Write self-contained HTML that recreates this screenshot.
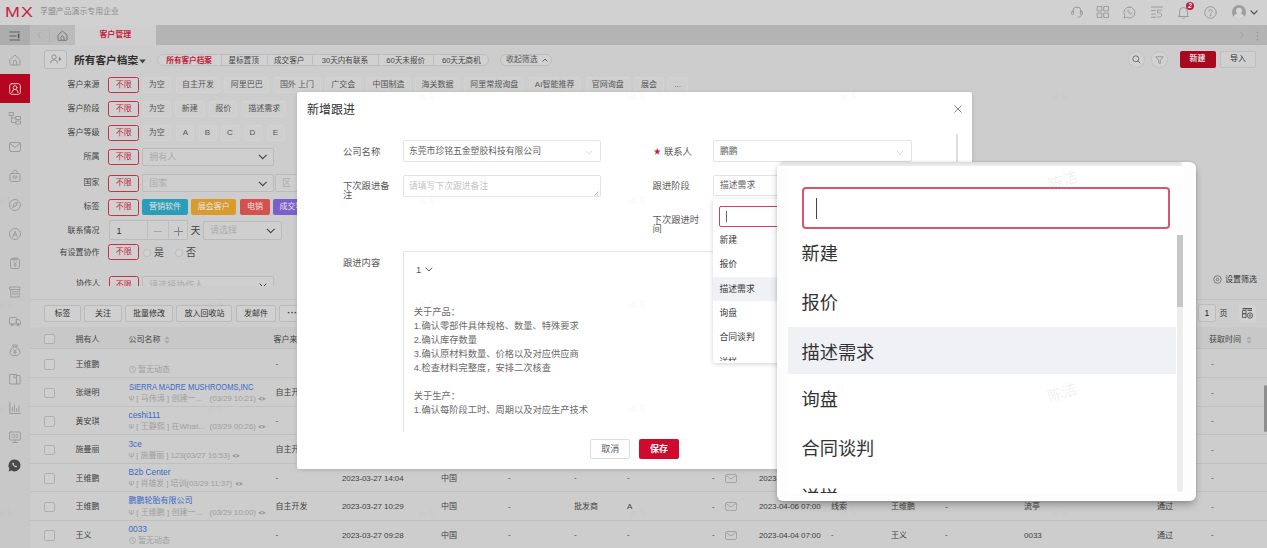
<!DOCTYPE html>
<html lang="zh-CN">
<head>
<meta charset="utf-8">
<title>客户管理</title>
<style>
*{box-sizing:border-box;margin:0;padding:0}
html,body{width:1267px;height:548px;overflow:hidden;background:#cdcdcd}
body{font-family:"Liberation Sans","Noto Sans CJK SC",sans-serif;font-size:8px;color:#333;position:relative;line-height:1}
.a{position:absolute;white-space:nowrap}
svg{display:block;overflow:visible}
#hdr{left:0;top:0;width:1267px;height:25px;background:#d1d1d1}
#tabbar{left:0;top:25px;width:1267px;height:19.5px;background:#b4b4b4}
#side{left:0;top:44.5px;width:30px;height:504px;background:#c8c8c8}
.ic{stroke:#9c9c9c;fill:none;stroke-width:1;stroke-linecap:round;stroke-linejoin:round}
.lbl{font-size:8px;color:#444;text-align:right;width:60px;left:39.6px}
.nol{left:108.4px;width:30.6px;height:16.6px;border:1.2px solid #c62f46;border-radius:2.5px;color:#c4283f;font-size:8px;line-height:14.2px;text-align:center;background:#d0d0d0}
.opt{font-size:8px;color:#555;line-height:14px;height:16px;padding:0;text-align:center;border:1px solid #d3d3d3;border-radius:2px;background:#cfcfcf}
.sel{height:18px;border:1px solid #bbb;border-radius:2px;background:#cfcfcf;font-size:9px;color:#adadad;line-height:16px;padding-left:6px}
.tag{height:15.5px;border-radius:2px;color:#e4e4e4;font-size:8px;line-height:15.5px;text-align:center}
.tb{top:304.5px;height:17.5px;border:1px solid #bababa;border-radius:2px;background:#d0d0d0;font-size:8px;color:#333;line-height:15.5px;text-align:center}
.cb{width:10.5px;height:10.5px;border:1px solid #b0b0b0;border-radius:2px;background:#cfcfcf;left:44px}
.t{font-size:8px;color:#424242;line-height:10px}
.co{font-size:8px;color:#3b69c4;left:128.5px;line-height:10px}
.sub{font-size:8px;color:#a0a0a0;left:128.5px;line-height:10px}
.wm{font-size:8px;color:rgba(110,110,110,.08);transform:rotate(-18deg)}
</style>
</head>
<body>
<div class="a" id="hdr"></div>
<div class="a" id="tabbar"></div>
<div class="a" id="side"></div>


<div class="a" style="left:5px;top:2.5px;font-size:15.5px;color:#c4213c;letter-spacing:1px;transform:scaleX(1.15);transform-origin:0 0;line-height:17px">MX</div>
<div class="a" style="left:40px;top:7px;font-size:7.9px;color:#8c8c8c;line-height:9px">孚盟产品演示专用企业</div>
<svg class="a ic" style="left:1070px;top:5px" width="14" height="14" viewBox="0 0 14 14"><path d="M3 7.5V6a4 4 0 0 1 8 0v1.5"/><rect x="1.6" y="6.2" width="2" height="3.4" rx="0.8"/><rect x="10.4" y="6.2" width="2" height="3.4" rx="0.8"/><path d="M11.2 9.8c0 1.6-1.2 2.4-3.2 2.4"/></svg>
<svg class="a ic" style="left:1097px;top:6px" width="12" height="12" viewBox="0 0 12 12"><rect x="0.5" y="0.5" width="4.4" height="4.4"/><rect x="7.1" y="0.5" width="4.4" height="4.4"/><rect x="0.5" y="7.1" width="4.4" height="4.4"/><rect x="7.1" y="7.1" width="4.4" height="4.4"/></svg>
<svg class="a ic" style="left:1123px;top:5.5px" width="13" height="13" viewBox="0 0 13 13"><path d="M6.5 1a5.5 5.5 0 1 1-2.9 10.2L1 12l.8-2.5A5.5 5.5 0 0 1 6.5 1z"/><path d="M4.6 4.2c-.4.5-.2 1.6 1 2.800s2.300 1.500 2.900 1.100l.3-.7-1.100-.6-.5.4c-.6-.2-1.300-.9-1.600-1.600l.4-.5-.6-1.100z" stroke-width="0.7"/></svg>
<svg class="a ic" style="left:1151px;top:6px" width="12" height="12" viewBox="0 0 12 12"><path d="M0.5 1h11M0.5 4.5h4M0.5 8h4M0.5 11.3h4"/><path d="M6.5 4.2h4.200M6.5 4.2v2.800c2-.6 4.200 0 4.200 2s-2.500 2.800-4.500 1.800" stroke-width="0.9"/></svg>
<svg class="a ic" style="left:1177px;top:5px" width="13" height="14" viewBox="0 0 13 14"><path d="M2.5 10.5V6.5a4 4 0 0 1 8 0v4l1 1h-10z"/><path d="M5.3 12.8a1.3 1.3 0 0 0 2.400 0"/></svg>
<div class="a" style="left:1186px;top:2px;width:8px;height:8px;border-radius:4px;background:#c01f3a;color:#eee;font-size:6.5px;line-height:8px;text-align:center;font-weight:bold;font-style:italic">2</div>
<svg class="a ic" style="left:1204px;top:5.5px" width="13" height="13" viewBox="0 0 13 13"><circle cx="6.5" cy="6.5" r="5.8"/><path d="M4.8 5.2a1.700 1.700 0 1 1 2.500 1.500c-.6.300-.8.700-.8 1.300"/><circle cx="6.5" cy="9.7" r="0.3"/></svg>
<svg class="a" style="left:1231.5px;top:5px" width="14" height="14" viewBox="0 0 14 14"><circle cx="7" cy="7" r="7" fill="#9d9d9d"/><circle cx="7" cy="5.8" r="3" fill="#d6d6d6"/><path d="M1.8 11.700a5.500 5.500 0 0 1 10.400 0A7 7 0 0 1 1.800 11.700z" fill="#d6d6d6"/></svg>
<svg class="a" style="left:1250px;top:9.5px" width="8" height="5" viewBox="0 0 8 5"><path d="M1 1l3 3 3-3" fill="none" stroke="#555" stroke-width="1.2" stroke-linecap="round" stroke-linejoin="round"/></svg>
<div class="a" style="left:0;top:25px;width:30px;height:19.5px;background:#adadad"></div>
<div class="a" style="left:30px;top:25px;width:45px;height:19.5px;background:#bbbbbb"></div>
<div class="a" style="left:49px;top:28px;width:1px;height:14px;background:#b3b3b3"></div>
<svg class="a" style="left:9px;top:30.8px" width="12" height="10" viewBox="0 0 12 10"><path d="M0.5 1h10.500M0.500 5h7M0.500 9h10.500" stroke="#5a5a5a" stroke-width="0.9" fill="none"/><path d="M9.6 3.3v3.400" stroke="#555" stroke-width="1.5" stroke-linecap="round"/></svg>
<svg class="a" style="left:37px;top:31px" width="5" height="8" viewBox="0 0 5 8"><path d="M4 0.5L1 4l3 3.500" stroke="#a9a9a9" stroke-width="1" fill="none"/></svg>
<svg class="a" style="left:56.5px;top:29.5px" width="11" height="11" viewBox="0 0 11 11"><path d="M1 5L5.500 1 10 5v4.500a.8.800 0 0 1-.8.800H1.800a.8.800 0 0 1-.8-.8z" stroke="#777" stroke-width="1" fill="none" stroke-linejoin="round"/><path d="M4 10V7.500a1.500 1.500 0 0 1 3 0V10" stroke="#777" stroke-width="0.9" fill="none"/></svg>
<div class="a" style="left:75px;top:25px;width:80.5px;height:19.5px;background:#cfcfcf"></div>
<div class="a" style="left:75px;top:25px;width:80.5px;height:19.5px;line-height:19.5px;text-align:center;padding-left:0;font-size:7.9px;font-weight:bold;color:#c4213c">客户管理</div>
<svg class="a" style="left:1239px;top:31px" width="5" height="8" viewBox="0 0 5 8"><path d="M1 0.5L4 4 1 7.500" stroke="#a3a3a3" stroke-width="1" fill="none"/></svg>
<svg class="a" style="left:1256px;top:30.5px" width="3" height="10" viewBox="0 0 3 10"><circle cx="1.5" cy="1.3" r="0.9" fill="#999"/><circle cx="1.5" cy="5" r="0.9" fill="#999"/><circle cx="1.5" cy="8.7" r="0.9" fill="#999"/></svg>

<svg class="a ic" style="left:8.7px;top:53.5px" width="12" height="12" viewBox="0 0 12 12"><path d="M1 5.5L6 1l5 4.500V10.200a.8.800 0 0 1-.8.800H1.800a.8.800 0 0 1-.8-.8z"/><path d="M4.3 11V8a1.700 1.700 0 0 1 3.400 0v3"/></svg>
<div class="a" style="left:0;top:74px;width:30.2px;height:28.5px;background:#b5061f"></div>
<svg class="a ic" style="left:8.7px;top:82.5px;stroke:#e3c9cd" width="12" height="12" viewBox="0 0 12 12"><rect x="0.7" y="0.7" width="10.6" height="10.6" rx="2"/><circle cx="6" cy="4.6" r="1.9"/><path d="M2.8 9.6a3.200 3.200 0 0 1 6.400 0"/></svg>
<svg class="a ic" style="left:8.7px;top:111.5px" width="12" height="12" viewBox="0 0 12 12"><rect x="0.5" y="0.5" width="4" height="3"/><rect x="7" y="4.5" width="4.5" height="3"/><rect x="7" y="9" width="4.5" height="3"/><path d="M2.5 3.5v7H7M2.500 6H7"/></svg>
<svg class="a ic" style="left:8.7px;top:140.5px" width="12" height="12" viewBox="0 0 12 12"><rect x="0.5" y="1.5" width="11" height="9" rx="1.5"/><path d="M1 2.5l5 4 5-4"/></svg>
<svg class="a ic" style="left:8.7px;top:169.5px" width="12" height="12" viewBox="0 0 12 12"><path d="M2 3.5h8a1 1 0 0 1 1 1V10a1.500 1.500 0 0 1-1.500 1.500h-7A1.500 1.500 0 0 1 1 10V4.500a1 1 0 0 1 1-1z"/><path d="M3.8 3.5V2.500a2.200 2.200 0 0 1 4.400 0v1"/><path d="M4 6.5a2 2 0 0 0 4 0z"/></svg>
<svg class="a ic" style="left:8.7px;top:198.5px" width="12" height="12" viewBox="0 0 12 12"><circle cx="6" cy="6" r="5.5"/><path d="M8.3 3.7L7 7 3.700 8.300 5 5z"/></svg>
<svg class="a ic" style="left:8.7px;top:227.5px" width="12" height="12" viewBox="0 0 12 12"><circle cx="6" cy="6" r="5.5"/><path d="M3.8 8.8L6 3.200l2.200 5.600M4.600 7h2.800"/></svg>
<svg class="a ic" style="left:8.7px;top:256.5px" width="12" height="12" viewBox="0 0 12 12"><rect x="1.5" y="2" width="9" height="9.5" rx="1.2"/><path d="M4 2V1h4v1.800H4z"/><path d="M4.5 5l1.500 1.800L7.500 5M6 6.800v3M4.800 8h2.400"/></svg>
<svg class="a ic" style="left:8.7px;top:285.5px" width="12" height="12" viewBox="0 0 12 12"><rect x="1" y="1" width="10" height="2.5"/><path d="M1.8 3.5v7.500h8.400V3.500"/><path d="M3.5 5.8h5M3.500 8h5"/></svg>
<svg class="a ic" style="left:8.7px;top:314.5px" width="12" height="12" viewBox="0 0 12 12"><rect x="0.5" y="2.5" width="7" height="6.5" rx="1"/><path d="M7.5 4.5h2.500l1.500 2V9H7.500z"/><circle cx="3" cy="9.8" r="1.1"/><circle cx="9" cy="9.8" r="1.1"/></svg>
<svg class="a ic" style="left:8.7px;top:343.5px" width="12" height="12" viewBox="0 0 12 12"><path d="M4.5 3L3.500 1h5L7.500 3"/><path d="M4.5 3C2.500 4.200 1 6.500 1 8.500 1 10.500 2.500 11.500 6 11.500s5-1 5-3C11 6.500 9.500 4.200 7.500 3z"/><path d="M4.7 5.7L6 7.300l1.300-1.600M6 7.300v2.500M4.800 8.300h2.400"/></svg>
<svg class="a ic" style="left:8.7px;top:372.5px" width="12" height="12" viewBox="0 0 12 12"><path d="M1 1.5h6.500v9.500H1zM7.500 2.500H11V11H7.500"/><path d="M5 1.5v3.500l1-.8 1 .8"/></svg>
<svg class="a ic" style="left:8.7px;top:401.5px" width="12" height="12" viewBox="0 0 12 12"><path d="M0.8 0.5V11.500h10.700"/><path d="M3.3 9.5V5.500M5.500 9.500V3M7.700 9.500V6.500M9.900 9.500V4"/></svg>
<svg class="a ic" style="left:8.7px;top:430.5px" width="12" height="12" viewBox="0 0 12 12"><rect x="0.5" y="1" width="11" height="8" rx="1"/><path d="M3.5 11.5h5M6 9v2.500"/><path d="M3.5 3.5h2v3h-2zM7 3.500h1.800M7 5h1.800M7 6.500h1.800" stroke-width="0.7"/></svg>
<svg class="a" style="left:8px;top:459.0px" width="13" height="13" viewBox="0 0 13 13"><path d="M6.5 0.5a6 6 0 1 1-3.100 11.100L0.500 12.500l.9-2.800A6 6 0 0 1 6.500 0.500z" fill="#4a4a4a"/><path d="M4.5 3.8c-.5.6-.2 1.900 1.100 3.200s2.600 1.600 3.200 1.100l.3-.8-1.200-.7-.5.500c-.7-.3-1.400-1-1.700-1.700l.5-.5-.7-1.200z" fill="#cfcfcf"/></svg>
<div class="a" style="left:44px;top:49.8px;width:23px;height:18.8px;border:1px solid #b8b8b8;border-radius:3px;background:#d1d1d1"></div>
<svg class="a" style="left:50px;top:54.3px" width="12" height="10" viewBox="0 0 12 10"><circle cx="4" cy="3" r="2.2" fill="none" stroke="#8a8a8a" stroke-width="0.9"/><path d="M0.5 9.3a3.500 3.500 0 0 1 7 0" fill="none" stroke="#8a8a8a" stroke-width="0.9"/><path d="M8.800 2.600l2.800 2.400-2.800 2.400z" fill="#8a8a8a"/></svg>
<div class="a" style="left:74px;top:53.8px;font-size:10.7px;font-weight:bold;color:#2f2f2f;line-height:13px">所有客户档案</div>
<svg class="a" style="left:138.8px;top:58.8px" width="7" height="5" viewBox="0 0 7 5"><path d="M0.3 0.5h6.400L3.500 4.500z" fill="#444"/></svg>
<div class="a" style="left:156.5px;top:54px;width:332.5px;height:12px;border:1px solid #bdbdbd;border-radius:6px;background:#d1d1d1"></div>
<div class="a" style="left:156.4px;top:54.5px;width:65.4px;height:12px;line-height:11.5px;text-align:center;font-size:7.6px;color:#c4213c;font-weight:bold">所有客户档案</div>
<div class="a" style="left:218.7px;top:54.5px;width:49.8px;height:12px;line-height:11.5px;text-align:center;font-size:7.6px;color:#444">星标置顶</div>
<div class="a" style="left:264.4px;top:54.5px;width:49.6px;height:12px;line-height:11.5px;text-align:center;font-size:7.6px;color:#444">成交客户</div>
<div class="a" style="left:312.2px;top:54.5px;width:65.5px;height:12px;line-height:11.5px;text-align:center;font-size:7.6px;color:#444">30天内有联系</div>
<div class="a" style="left:377.0px;top:54.5px;width:57.5px;height:12px;line-height:11.5px;text-align:center;font-size:7.6px;color:#444">60天未报价</div>
<div class="a" style="left:432.7px;top:54.5px;width:57.3px;height:12px;line-height:11.5px;text-align:center;font-size:7.6px;color:#444">60天无商机</div>
<div class="a" style="left:221px;top:54.5px;width:1px;height:11px;background:#bdbdbd"></div>
<div class="a" style="left:266.6px;top:54.5px;width:1px;height:11px;background:#bdbdbd"></div>
<div class="a" style="left:312px;top:54.5px;width:1px;height:11px;background:#bdbdbd"></div>
<div class="a" style="left:377.5px;top:54.5px;width:1px;height:11px;background:#bdbdbd"></div>
<div class="a" style="left:433.3px;top:54.5px;width:1px;height:11px;background:#bdbdbd"></div>
<div class="a" style="left:500px;top:54px;width:52px;height:12px;border:1px solid #bdbdbd;border-radius:6px;background:#d1d1d1;font-size:7.9px;line-height:10.5px;color:#555;padding-left:5px">收起筛选</div>
<svg class="a" style="left:541.5px;top:58px" width="6" height="4" viewBox="0 0 6 4"><path d="M0.5 3.5L3 1l2.500 2.500" fill="none" stroke="#555" stroke-width="0.9"/></svg>
<div class="a" style="left:1127.5px;top:51px;width:17px;height:17px;border:1px solid #c2c2c2;border-radius:50%;background:#d2d2d2"></div>
<svg class="a" style="left:1131.5px;top:55px" width="9" height="9" viewBox="0 0 9 9"><circle cx="3.8" cy="3.8" r="3" fill="none" stroke="#6a6a6a" stroke-width="0.9"/><path d="M6 6l2.300 2.300" stroke="#6a6a6a" stroke-width="0.9"/></svg>
<div class="a" style="left:1150.5px;top:51px;width:17px;height:17px;border:1px solid #c2c2c2;border-radius:50%;background:#d2d2d2"></div>
<svg class="a" style="left:1154.5px;top:55.5px" width="9" height="9" viewBox="0 0 9 9"><path d="M0.8 0.8h7.400L5.300 4.300v3.400l-1.600-.8V4.300z" fill="none" stroke="#8a8a8a" stroke-width="0.8" stroke-linejoin="round"/></svg>
<div class="a" style="left:1179.5px;top:51px;width:36px;height:16.5px;border-radius:2px;background:#a80820;color:#e6d8da;font-size:8px;font-weight:bold;line-height:16.5px;text-align:center">新建</div>
<div class="a" style="left:1220px;top:51px;width:36px;height:16.5px;border-radius:2px;border:1px solid #c0c0c0;background:#d0d0d0;color:#333;font-size:8px;line-height:14.5px;text-align:center">导入</div>
<div class="a lbl" style="top:79.8px;line-height:10px">客户来源</div>
<div class="a nol" style="top:76.5px">不限</div>
<div class="a opt" style="left:142.5px;width:28.3px;top:76.5px">为空</div>
<div class="a opt" style="left:175.8px;width:44.3px;top:76.5px">自主开发</div>
<div class="a opt" style="left:224.2px;width:45.1px;top:76.5px">阿里巴巴</div>
<div class="a opt" style="left:273.5px;width:47.0px;top:76.5px">国外 上门</div>
<div class="a opt" style="left:324.9px;width:36.6px;top:76.5px">广交会</div>
<div class="a opt" style="left:365.8px;width:45.2px;top:76.5px">中国制造</div>
<div class="a opt" style="left:415.2px;width:44.8px;top:76.5px">海关数据</div>
<div class="a opt" style="left:464.2px;width:60.3px;top:76.5px">阿里常规询盘</div>
<div class="a opt" style="left:528.5px;width:52.3px;top:76.5px">AI智能推荐</div>
<div class="a opt" style="left:585.5px;width:44.3px;top:76.5px">官网询盘</div>
<div class="a opt" style="left:634.1px;width:29.9px;top:76.5px">展会</div>
<div class="a opt" style="left:667.0px;width:21.1px;top:76.5px">...</div>
<div class="a lbl" style="top:103.8px;line-height:10px">客户阶段</div>
<div class="a nol" style="top:100.5px">不限</div>
<div class="a opt" style="left:142.5px;width:28.3px;top:100.5px">为空</div>
<div class="a opt" style="left:175.0px;width:29.5px;top:100.5px">新建</div>
<div class="a opt" style="left:209.1px;width:28.2px;top:100.5px">报价</div>
<div class="a opt" style="left:241.9px;width:44.6px;top:100.5px">描述需求</div>
<div class="a lbl" style="top:127.8px;line-height:10px">客户等级</div>
<div class="a nol" style="top:124.5px">不限</div>
<div class="a opt" style="left:142.5px;width:28.3px;top:124.5px">为空</div>
<div class="a opt" style="left:176.3px;width:18.0px;top:124.5px">A</div>
<div class="a opt" style="left:198.5px;width:18.0px;top:124.5px">B</div>
<div class="a opt" style="left:221.0px;width:18.0px;top:124.5px">C</div>
<div class="a opt" style="left:243.5px;width:18.0px;top:124.5px">D</div>
<div class="a opt" style="left:266.5px;width:18.0px;top:124.5px">E</div>
<div class="a lbl" style="top:151.8px;line-height:10px">所属</div>
<div class="a nol" style="top:148.5px">不限</div>
<div class="a sel" style="left:142.2px;top:147.5px;width:131.5px">拥有人</div>
<svg class="a" style="left:258px;top:154.2px" width="9.5" height="5.8" viewBox="0 0 8 5"><path d="M0.7 0.7L4 4l3.300-3.300" fill="none" stroke="#4a4a4a" stroke-width="1.05"/></svg>
<div class="a lbl" style="top:178.3px;line-height:10px">国家</div>
<div class="a nol" style="top:175.0px">不限</div>
<div class="a sel" style="left:142.2px;top:174.2px;width:131.5px">国家</div>
<svg class="a" style="left:258px;top:180.7px" width="9.5" height="5.8" viewBox="0 0 8 5"><path d="M0.7 0.7L4 4l3.300-3.300" fill="none" stroke="#4a4a4a" stroke-width="1.05"/></svg>
<div class="a sel" style="left:275px;top:174.2px;width:60px">区</div>
<div class="a lbl" style="top:202.3px;line-height:10px">标签</div>
<div class="a nol" style="top:199.0px">不限</div>
<div class="a tag" style="left:142.2px;top:199.2px;width:45.5px;background:#2a9db8">营销软件</div>
<div class="a tag" style="left:191.2px;top:199.2px;width:45.3px;background:#d99b2d">展会客户</div>
<div class="a tag" style="left:240px;top:199.2px;width:30.0px;background:#d4524e">电销</div>
<div class="a tag" style="left:273px;top:199.2px;width:45.0px;background:#7b60cc">成交客户</div>
<div class="a lbl" style="top:226.3px;line-height:10px">联系情况</div>
<div class="a" style="left:108.5px;top:220px;width:79.5px;height:20.3px;border:1px solid #bbb;border-radius:2px;background:#cfcfcf"></div>
<div class="a" style="left:116.5px;top:225.5px;font-size:9px;color:#333;line-height:11px">1</div>
<div class="a" style="left:147px;top:220px;width:1px;height:20.3px;background:#bdbdbd"></div>
<div class="a" style="left:167.8px;top:220px;width:1px;height:20.3px;background:#bdbdbd"></div>
<div class="a" style="left:154px;top:230.5px;width:8px;height:1px;background:#a8a8a8"></div>
<div class="a" style="left:174px;top:230.5px;width:9px;height:1px;background:#848484"></div>
<div class="a" style="left:178px;top:226.5px;width:1px;height:9px;background:#848484"></div>
<div class="a" style="left:190.4px;top:225px;font-size:10px;color:#444;line-height:12px">天</div>
<div class="a sel" style="left:203px;top:221px;width:78.5px;height:18.6px;line-height:16.6px">请选择</div>
<svg class="a" style="left:265.5px;top:227.8px" width="9.5" height="5.8" viewBox="0 0 8 5"><path d="M0.7 0.7L4 4l3.300-3.300" fill="none" stroke="#4a4a4a" stroke-width="1.05"/></svg>
<div class="a lbl" style="top:248.0px;line-height:10px">有设置协作</div>
<div class="a nol" style="top:243.5px">不限</div>
<div class="a" style="left:142.5px;top:248.5px;width:8px;height:8px;border:1px solid #bdbdbd;border-radius:50%;background:#d3d3d3"></div>
<div class="a" style="left:153.9px;top:246.8px;font-size:10px;color:#4a4a4a;line-height:12px">是</div>
<div class="a" style="left:174.5px;top:248.5px;width:8px;height:8px;border:1px solid #bdbdbd;border-radius:50%;background:#d3d3d3"></div>
<div class="a" style="left:186px;top:246.8px;font-size:10px;color:#4a4a4a;line-height:12px">否</div>
<div class="a" style="left:30px;top:270px;width:300px;height:15.6px;overflow:hidden">
<div class="a lbl" style="left:10px;top:9.3px;line-height:10px">协作人</div>
<div class="a nol" style="left:78.5px;top:6.3px;line-height:15px">不限</div>
<div class="a sel" style="left:112.2px;top:5.8px;width:131.5px">请选择协作人</div>
<svg class="a" style="left:229px;top:13px" width="8" height="5" viewBox="0 0 8 5"><path d="M0.7 0.7L4 4l3.300-3.300" fill="none" stroke="#444" stroke-width="1"/></svg>
</div>
<div class="a" style="left:30px;top:298.5px;width:1237px;height:1px;background:#c1c1c1"></div>
<div class="a tb" style="left:43.9px;width:37.2px">标签</div>
<div class="a tb" style="left:84.3px;width:37.3px">关注</div>
<div class="a tb" style="left:124.8px;width:48.4px">批量修改</div>
<div class="a tb" style="left:176.4px;width:56.0px">放入回收站</div>
<div class="a tb" style="left:235.6px;width:40.9px">发邮件</div>
<div class="a tb" style="left:279.3px;width:26.0px;font-weight:bold;font-size:9px;letter-spacing:0.3px">···</div>
<svg class="a" style="left:1213px;top:275px" width="9" height="9" viewBox="0 0 9 9"><circle cx="4.5" cy="4.5" r="3.8" fill="none" stroke="#666" stroke-width="0.8"/><circle cx="4.5" cy="4.5" r="1.3" fill="none" stroke="#666" stroke-width="0.8"/></svg>
<div class="a" style="left:1225px;top:274.5px;font-size:8px;color:#333;line-height:10px">设置筛选</div>
<div class="a" style="left:1198px;top:304px;width:17.5px;height:18px;border:1px solid #bdbdbd;border-radius:2px;background:#d1d1d1;font-size:8.5px;line-height:16px;color:#222;padding-left:5.5px">1</div>
<div class="a" style="left:1219.5px;top:308.7px;font-size:8px;color:#333;line-height:10px">页</div>
<div class="a" style="left:1239px;top:304.5px;width:17px;height:17px;border-radius:2px;background:#d3d3d3"></div>
<svg class="a" style="left:1242px;top:307.5px" width="12" height="11" viewBox="0 0 12 11"><path d="M0.5 0.7h9.500" stroke="#444" stroke-width="1.2"/><path d="M0.5 2.5h3.500v3.200h-3.500zM0.500 5.700h3.500v3.800h-3.500zM5.500 2.500h4.500" fill="none" stroke="#444" stroke-width="0.8"/><circle cx="8" cy="7.5" r="2.7" fill="none" stroke="#444" stroke-width="0.8"/><circle cx="8" cy="7.5" r="0.9" fill="none" stroke="#444" stroke-width="0.7"/></svg>
<div class="a" style="left:30px;top:327.3px;width:1237px;height:21.7px;background:#c8c8c8;border-bottom:1px solid #bfbfbf"></div>
<div class="a cb" style="top:333.7px"></div>
<div class="a t" style="left:75.4px;top:334.5px;color:#444">拥有人</div>
<div class="a t" style="left:128.5px;top:334.5px;color:#444">公司名称</div>
<svg class="a" style="left:164.3px;top:335.5px" width="6" height="8" viewBox="0 0 6 8"><path d="M3 0.3L5.500 3.300h-5zM3 7.700L5.500 4.700h-5z" fill="#a9a9a9"/></svg>
<div class="a t" style="left:273.6px;top:334.5px;color:#444">客户来源</div>
<div class="a t" style="left:1209px;top:334.5px;color:#444">获取时间</div>
<svg class="a" style="left:1245.7px;top:335.5px" width="6" height="8" viewBox="0 0 6 8"><path d="M3 0.3L5.500 3.300h-5zM3 7.700L5.500 4.700h-5z" fill="#a9a9a9"/></svg>
<div class="a" style="left:30px;top:377.0px;width:1237px;height:1px;background:#c0c0c0"></div>
<div class="a cb" style="top:359.3px"></div>
<div class="a t" style="left:75.4px;top:359.8px">王维鹏</div>
<div class="a sub" style="top:365.3px"><svg style="display:inline-block;vertical-align:-1px;margin-right:2.5px" width="7" height="7" viewBox="0 0 7 7"><circle cx="3.5" cy="3.5" r="3" fill="none" stroke="#a0a0a0" stroke-width="0.7"/><path d="M3.5 1.8v1.900l1.200 1" fill="none" stroke="#a0a0a0" stroke-width="0.7"/></svg>暂无动态</div>
<div class="a t" style="left:275.5px;top:359.0px">-</div>
<div class="a t" style="left:1211px;top:359.0px">-</div>
<div class="a" style="left:30px;top:405.5px;width:1237px;height:1px;background:#c0c0c0"></div>
<div class="a cb" style="top:387.8px"></div>
<div class="a t" style="left:75.4px;top:388.3px">张继明</div>
<div class="a co" style="top:381.5px;font-size:8.3px;transform:scaleX(0.906);transform-origin:0 50%">SIERRA MADRE MUSHROOMS,INC</div>
<div class="a sub" style="top:393.8px"><span style="font-size:7px;margin-right:2px">Ψ</span>[ 马伟涛 ] 创建一...</div>
<div class="a sub" style="left:209.6px;top:393.8px;letter-spacing:-0.1px">(03/29 10:21)<svg style="display:inline-block;vertical-align:-0.5px;margin-left:2.5px" width="8" height="5.7" viewBox="0 0 7 5"><path d="M0.3 2.5C1.500 0.700 5.500 0.700 6.700 2.500 5.500 4.300 1.500 4.300 0.300 2.500z" fill="#9a9a9a"/><circle cx="3.5" cy="2.5" r="0.9" fill="#cdcdcd"/></svg></div>
<div class="a t" style="left:275.5px;top:388.3px">自主开发</div>
<div class="a t" style="left:1211px;top:387.5px">-</div>
<div class="a" style="left:30px;top:434.0px;width:1237px;height:1px;background:#c0c0c0"></div>
<div class="a cb" style="top:416.3px"></div>
<div class="a t" style="left:75.4px;top:416.8px">黄安琪</div>
<div class="a co" style="top:410.0px;font-size:8.3px">ceshi111</div>
<div class="a sub" style="top:422.3px"><span style="font-size:7px;margin-right:2px">Ψ</span>[ 王静熙 ] 在What...</div>
<div class="a sub" style="left:209.6px;top:422.3px;letter-spacing:-0.1px">(03/29 00:26)<svg style="display:inline-block;vertical-align:-0.5px;margin-left:2.5px" width="8" height="5.7" viewBox="0 0 7 5"><path d="M0.3 2.5C1.500 0.700 5.500 0.700 6.700 2.500 5.500 4.300 1.500 4.300 0.300 2.500z" fill="#9a9a9a"/><circle cx="3.5" cy="2.5" r="0.9" fill="#cdcdcd"/></svg></div>
<div class="a t" style="left:275.5px;top:416.0px">-</div>
<div class="a t" style="left:1211px;top:416.0px">-</div>
<div class="a" style="left:30px;top:462.5px;width:1237px;height:1px;background:#c0c0c0"></div>
<div class="a cb" style="top:444.8px"></div>
<div class="a t" style="left:75.4px;top:445.3px">施曼丽</div>
<div class="a co" style="top:438.5px;font-size:8.3px">3ce</div>
<div class="a sub" style="top:450.8px;letter-spacing:-0.1px"><span style="font-size:7px;margin-right:2px">Ψ</span>[ 施曼丽 ] 123(03/27 16:53)<svg style="display:inline-block;vertical-align:-0.5px;margin-left:2.5px" width="8" height="5.7" viewBox="0 0 7 5"><path d="M0.3 2.5C1.500 0.700 5.500 0.700 6.700 2.500 5.500 4.300 1.500 4.300 0.300 2.500z" fill="#9a9a9a"/><circle cx="3.5" cy="2.5" r="0.9" fill="#cdcdcd"/></svg></div>
<div class="a t" style="left:275.5px;top:445.3px">自主开发</div>
<div class="a t" style="left:1211px;top:444.5px">-</div>
<div class="a" style="left:30px;top:491.0px;width:1237px;height:1px;background:#c0c0c0"></div>
<div class="a cb" style="top:473.3px"></div>
<div class="a t" style="left:75.4px;top:473.8px">王维鹏</div>
<div class="a co" style="top:467.0px;font-size:8.3px">B2b Center</div>
<div class="a sub" style="top:479.3px;letter-spacing:-0.1px"><span style="font-size:7px;margin-right:2px">Ψ</span>[ 肖雄发 ] 培训(03/29 11:37)<svg style="display:inline-block;vertical-align:-0.5px;margin-left:2.5px" width="8" height="5.7" viewBox="0 0 7 5"><path d="M0.3 2.5C1.500 0.700 5.500 0.700 6.700 2.500 5.500 4.300 1.500 4.300 0.300 2.500z" fill="#9a9a9a"/><circle cx="3.5" cy="2.5" r="0.9" fill="#cdcdcd"/></svg></div>
<div class="a t" style="left:275.5px;top:473.0px">-</div>
<div class="a t" style="left:342px;top:473.8px;letter-spacing:-0.1px">2023-03-27 14:04</div>
<div class="a t" style="left:441px;top:473.8px">中国</div>
<div class="a t" style="left:508px;top:473.0px">-</div>
<div class="a t" style="left:574px;top:473.0px">-</div>
<div class="a t" style="left:627px;top:473.0px">-</div>
<div class="a t" style="left:712px;top:473.0px">-</div>
<div class="a t" style="left:759px;top:473.8px;letter-spacing:-0.1px">2023-04-06 07:00</div>
<div class="a t" style="left:831px;top:473.0px">-</div>
<div class="a t" style="left:891px;top:473.8px">王维鹏</div>
<div class="a t" style="left:945px;top:473.0px">-</div>
<div class="a t" style="left:1024px;top:473.0px">-</div>
<div class="a t" style="left:1157px;top:473.8px">通过</div>
<svg class="a" style="left:724.5px;top:473.8px" width="12" height="9" viewBox="0 0 12 9"><rect x="0.5" y="0.5" width="11" height="8" rx="1.5" fill="none" stroke="#999" stroke-width="0.8"/><path d="M1.3 1.600L6 5l4.700-3.400" fill="none" stroke="#999" stroke-width="0.8"/></svg>
<div class="a t" style="left:1211px;top:473.0px">-</div>
<div class="a" style="left:30px;top:519.5px;width:1237px;height:1px;background:#c0c0c0"></div>
<div class="a cb" style="top:501.8px"></div>
<div class="a t" style="left:75.4px;top:502.3px">王维鹏</div>
<div class="a co" style="top:495.5px">鹏鹏轮胎有限公司</div>
<div class="a sub" style="top:507.8px"><span style="font-size:7px;margin-right:2px">Ψ</span>[ 王维鹏 ] 创建一...</div>
<div class="a sub" style="left:209.6px;top:507.8px;letter-spacing:-0.1px">(03/29 10:00)<svg style="display:inline-block;vertical-align:-0.5px;margin-left:2.5px" width="8" height="5.7" viewBox="0 0 7 5"><path d="M0.3 2.5C1.500 0.700 5.500 0.700 6.700 2.500 5.500 4.300 1.500 4.300 0.300 2.500z" fill="#9a9a9a"/><circle cx="3.5" cy="2.5" r="0.9" fill="#cdcdcd"/></svg></div>
<div class="a t" style="left:275.5px;top:502.3px">自主开发</div>
<div class="a t" style="left:342px;top:502.3px;letter-spacing:-0.1px">2023-03-27 10:29</div>
<div class="a t" style="left:441px;top:502.3px">中国</div>
<div class="a t" style="left:508px;top:501.5px">-</div>
<div class="a t" style="left:574px;top:502.3px">批发商</div>
<div class="a t" style="left:627px;top:502.3px">A</div>
<div class="a t" style="left:712px;top:501.5px">-</div>
<div class="a t" style="left:759px;top:502.3px;letter-spacing:-0.1px">2023-04-06 07:00</div>
<div class="a t" style="left:831px;top:502.3px">线索</div>
<div class="a t" style="left:891px;top:502.3px">王维鹏</div>
<div class="a t" style="left:945px;top:501.5px">-</div>
<div class="a t" style="left:1024px;top:502.3px">流亭</div>
<div class="a t" style="left:1157px;top:502.3px">通过</div>
<svg class="a" style="left:724.5px;top:502.3px" width="12" height="9" viewBox="0 0 12 9"><rect x="0.5" y="0.5" width="11" height="8" rx="1.5" fill="none" stroke="#999" stroke-width="0.8"/><path d="M1.3 1.600L6 5l4.700-3.400" fill="none" stroke="#999" stroke-width="0.8"/></svg>
<div class="a t" style="left:1211px;top:501.5px">-</div>
<div class="a" style="left:30px;top:548.0px;width:1237px;height:1px;background:#c0c0c0"></div>
<div class="a cb" style="top:530.3px"></div>
<div class="a t" style="left:75.4px;top:530.8px">王义</div>
<div class="a co" style="top:524.0px;font-size:8.3px">0033</div>
<div class="a sub" style="top:536.3px"><svg style="display:inline-block;vertical-align:-1px;margin-right:2.5px" width="7" height="7" viewBox="0 0 7 7"><circle cx="3.5" cy="3.5" r="3" fill="none" stroke="#a0a0a0" stroke-width="0.7"/><path d="M3.5 1.8v1.900l1.200 1" fill="none" stroke="#a0a0a0" stroke-width="0.7"/></svg>暂无动态</div>
<div class="a t" style="left:275.5px;top:530.0px">-</div>
<div class="a t" style="left:342px;top:530.8px;letter-spacing:-0.1px">2023-03-27 09:28</div>
<div class="a t" style="left:441px;top:530.8px">中国</div>
<div class="a t" style="left:508px;top:530.0px">-</div>
<div class="a t" style="left:574px;top:530.0px">-</div>
<div class="a t" style="left:627px;top:530.0px">-</div>
<div class="a t" style="left:712px;top:530.0px">-</div>
<div class="a t" style="left:759px;top:530.8px;letter-spacing:-0.1px">2023-04-04 07:00</div>
<div class="a t" style="left:831px;top:530.0px">-</div>
<div class="a t" style="left:891px;top:530.8px">王义</div>
<div class="a t" style="left:945px;top:530.0px">-</div>
<div class="a t" style="left:1024px;top:530.8px">0033</div>
<div class="a t" style="left:1157px;top:530.8px">通过</div>
<svg class="a" style="left:724.5px;top:530.8px" width="12" height="9" viewBox="0 0 12 9"><rect x="0.5" y="0.5" width="11" height="8" rx="1.5" fill="none" stroke="#999" stroke-width="0.8"/><path d="M1.3 1.600L6 5l4.700-3.400" fill="none" stroke="#999" stroke-width="0.8"/></svg>
<div class="a t" style="left:1211px;top:530.0px">-</div>
<div class="a" style="left:1264px;top:385px;width:3px;height:47px;background:#8e8e8e;border-radius:1.5px"></div>
<div class="a" id="modal" style="left:297px;top:92px;width:675px;height:376.5px;background:#fff;border-radius:2px;box-shadow:0 1px 4px rgba(0,0,0,.15)">
<div class="a" style="left:10.0px;top:11.0px;font-size:12px;color:#333;line-height:14px">新增跟进</div>
<svg class="a" style="left:656.5px;top:12.5px" width="8" height="8" viewBox="0 0 8 8"><path d="M0.5 0.5l7 7M7.500 0.500l-7 7" stroke="#777" stroke-width="0.9" fill="none"/></svg>
<div class="a" style="left:659.0px;top:41.5px;width:2px;height:330px;background:#dcdcdc;border-radius:1px"></div>
<div class="a" style="left:46.0px;top:56.0px;font-size:9.3px;color:#5a5a5a;line-height:9.3px">公司名称</div>
<div class="a" style="left:106.0px;top:48.0px;width:197.5px;height:21.5px;border:1px solid #e3e3e3;border-radius:2px;font-size:8.8px;color:#606060;line-height:20.5px;padding-left:5px">东莞市珍铭五金塑胶科技有限公司</div>
<svg class="a" style="left:288px;top:57.5px" width="8" height="5" viewBox="0 0 8 5"><path d="M0.7 0.7L4 4l3.300-3.300" fill="none" stroke="#d5d5d5" stroke-width="0.9"/></svg>
<div class="a" style="left:356.5px;top:56.3px;font-size:7.5px;color:#c4213c;line-height:8px">★</div>
<div class="a" style="left:367.0px;top:56.0px;font-size:9.3px;color:#5a5a5a;line-height:9.3px">联系人</div>
<div class="a" style="left:415.5px;top:48.0px;width:199.5px;height:21.5px;border:1px solid #e3e3e3;border-radius:2px;font-size:8.8px;color:#606060;line-height:20.5px;padding-left:6.5px">鹏鹏</div>
<svg class="a" style="left:599px;top:57.5px" width="8" height="5" viewBox="0 0 8 5"><path d="M0.7 0.7L4 4l3.300-3.300" fill="none" stroke="#d5d5d5" stroke-width="0.9"/></svg>
<div class="a" style="left:46.0px;top:90.0px;font-size:9.3px;color:#5a5a5a;line-height:9.3px;white-space:normal;width:48px">下次跟进备注</div>
<div class="a" style="left:106.0px;top:83.0px;width:197.5px;height:22px;border:1px solid #e3e3e3;border-radius:2px;font-size:8.8px;color:#c3c3c3;line-height:20.5px;padding-left:5px">请填写下次跟进备注</div>
<svg class="a" style="left:296.5px;top:98.5px" width="5" height="5" viewBox="0 0 5 5"><path d="M0.5 4.5l4-4M2.700 4.500l1.800-1.800" stroke="#888" stroke-width="0.6"/></svg>
<div class="a" style="left:355.6px;top:90.0px;font-size:9.3px;color:#5a5a5a;line-height:9.3px">跟进阶段</div>
<div class="a" style="left:415.5px;top:83.0px;width:199.5px;height:20.5px;border:1px solid #e3e3e3;border-radius:2px;font-size:8.8px;color:#606060;line-height:19.5px;padding-left:6.5px">描述需求</div>
<div class="a" style="left:355.6px;top:123.5px;font-size:9.3px;color:#5a5a5a;line-height:9.3px;white-space:normal;width:48px">下次跟进时间</div>
<div class="a" style="left:46.0px;top:166.5px;font-size:9.3px;color:#5a5a5a;line-height:9.3px">跟进内容</div>
<div class="a" style="left:106.0px;top:159.0px;width:560px;height:181px;border:1px solid #e3e3e3;border-right:none;border-bottom:none;border-radius:2px 0 0 0"></div>
<div class="a" style="left:119.0px;top:172.8px;font-size:9.3px;color:#555;line-height:10px">1</div>
<svg class="a" style="left:128px;top:175px" width="8" height="5" viewBox="0 0 8 5"><path d="M0.7 0.7L4 4l3.300-3.300" fill="none" stroke="#555" stroke-width="1"/></svg>
<div class="a" style="left:116.7px;top:214.6px;font-size:9.25px;color:#6a6a6a;line-height:10px">关于产品：</div>
<div class="a" style="left:116.7px;top:228.7px;font-size:9.25px;color:#6a6a6a;line-height:10px">1.确认零部件具体规格、数量、特殊要求</div>
<div class="a" style="left:116.7px;top:242.7px;font-size:9.25px;color:#6a6a6a;line-height:10px">2.确认库存数量</div>
<div class="a" style="left:116.7px;top:256.8px;font-size:9.25px;color:#6a6a6a;line-height:10px">3.确认原材料数量、价格以及对应供应商</div>
<div class="a" style="left:116.7px;top:270.8px;font-size:9.25px;color:#6a6a6a;line-height:10px">4.检查材料完整度，安排二次核查</div>
<div class="a" style="left:116.7px;top:298.9px;font-size:9.25px;color:#6a6a6a;line-height:10px">关于生产：</div>
<div class="a" style="left:116.7px;top:313.0px;font-size:9.25px;color:#6a6a6a;line-height:10px">1.确认每阶段工时、周期以及对应生产技术</div>
<div class="a" style="left:415.5px;top:106.5px;width:80px;height:164px;background:#fff;box-shadow:0 1px 5px rgba(0,0,0,.18);border-radius:2px"></div>
<div class="a" style="left:422.0px;top:113.7px;width:70px;height:21.5px;border:1px solid #d0435a;border-radius:2px"></div>
<div class="a" style="left:428.5px;top:118.5px;width:1px;height:11.5px;background:#666"></div>
<div class="a" style="left:415.5px;top:184.8px;width:80px;height:24.2px;background:#f0f1f5"></div>
<div class="a" style="left:422.5px;top:142.8px;font-size:8.8px;color:#3a3a3a;line-height:10px">新建</div>
<div class="a" style="left:422.5px;top:167.2px;font-size:8.8px;color:#3a3a3a;line-height:10px">报价</div>
<div class="a" style="left:422.5px;top:191.8px;font-size:8.8px;color:#3a3a3a;line-height:10px">描述需求</div>
<div class="a" style="left:422.5px;top:216.0px;font-size:8.8px;color:#3a3a3a;line-height:10px">询盘</div>
<div class="a" style="left:422.5px;top:240.4px;font-size:8.8px;color:#3a3a3a;line-height:10px">合同谈判</div>
<div class="a" style="left:422.5px;top:264.8px;font-size:8.8px;color:#3a3a3a;line-height:10px;height:4.5px;overflow:hidden">送样</div>
<div class="a" style="left:293.4px;top:346.6px;width:39.5px;height:20.5px;border:1px solid #dcdcdc;border-radius:2px;font-size:9px;color:#5a5a5a;line-height:18.5px;text-align:center">取消</div>
<div class="a" style="left:342.0px;top:346.6px;width:40px;height:20.5px;border-radius:2px;background:#cf0a2c;font-size:9px;font-weight:bold;color:#fff;line-height:20.5px;text-align:center">保存</div>
</div>
<div class="a" id="popup" style="left:777px;top:162px;width:419px;height:338.5px;background:#fdfdfd;border-radius:6px;box-shadow:0 5px 9px -2px rgba(0,0,0,.32),0 0 3px rgba(0,0,0,.14);overflow:hidden">
<div class="a" style="left:2.0px;top:0.0px;width:403px;height:4px;background:linear-gradient(#dcdcdc,#eeeeee);border-radius:4px 3px 0 0"></div>
<div class="a" style="left:11.4px;top:4.5px;width:396px;height:326px;background:#fff"></div>
<div class="a" style="left:25.0px;top:25.4px;width:368px;height:41.3px;border:2px solid #d6566b;border-radius:4px;background:#fff"></div>
<div class="a" style="left:39.2px;top:35.7px;width:1.2px;height:21px;background:#444"></div>
<div class="a" style="left:400.2px;top:72.9px;width:5.5px;height:257px;background:#ededed;border-radius:0 0 2.7px 2.7px"></div>
<div class="a" style="left:400.2px;top:72.9px;width:5.5px;height:72px;background:#c6c6c6"></div>
<div class="a" style="left:10.8px;top:165.4px;width:388.7px;height:46.5px;background:#f0f1f5"></div>
<div class="a" style="left:24.5px;top:80.6px;font-size:18.2px;color:#333;line-height:22px">新建</div>
<div class="a" style="left:24.5px;top:129.6px;font-size:18.2px;color:#333;line-height:22px">报价</div>
<div class="a" style="left:24.5px;top:179.5px;font-size:18.2px;color:#333;line-height:22px">描述需求</div>
<div class="a" style="left:24.5px;top:227.4px;font-size:18.2px;color:#333;line-height:22px">询盘</div>
<div class="a" style="left:24.5px;top:276.3px;font-size:18.2px;color:#333;line-height:22px">合同谈判</div>
<div class="a" style="left:24.5px;top:324.5px;font-size:18.2px;color:#333;line-height:22px;height:6.5px;overflow:hidden">送样</div>
<div class="a" style="left:271.0px;top:11.0px;font-size:15px;color:rgba(120,120,120,.12);transform:rotate(-18deg)">陈洁</div>
<div class="a" style="left:270.0px;top:223.0px;font-size:15px;color:rgba(120,120,120,.12);transform:rotate(-18deg)">陈洁</div>
</div>
<div class="a wm" style="left:-3px;top:94px">陈洁</div>
<div class="a wm" style="left:208px;top:94px">陈洁</div>
<div class="a wm" style="left:419px;top:94px">陈洁</div>
<div class="a wm" style="left:630px;top:94px">陈洁</div>
<div class="a wm" style="left:841px;top:94px">陈洁</div>
<div class="a wm" style="left:1052px;top:94px">陈洁</div>
<div class="a wm" style="left:-3px;top:198px">陈洁</div>
<div class="a wm" style="left:208px;top:198px">陈洁</div>
<div class="a wm" style="left:419px;top:198px">陈洁</div>
<div class="a wm" style="left:630px;top:198px">陈洁</div>
<div class="a wm" style="left:-3px;top:302px">陈洁</div>
<div class="a wm" style="left:208px;top:302px">陈洁</div>
<div class="a wm" style="left:419px;top:302px">陈洁</div>
<div class="a wm" style="left:630px;top:302px">陈洁</div>
<div class="a wm" style="left:-3px;top:406px">陈洁</div>
<div class="a wm" style="left:208px;top:406px">陈洁</div>
<div class="a wm" style="left:419px;top:406px">陈洁</div>
<div class="a wm" style="left:630px;top:406px">陈洁</div>
<div class="a wm" style="left:-3px;top:510px">陈洁</div>
<div class="a wm" style="left:208px;top:510px">陈洁</div>
<div class="a wm" style="left:419px;top:510px">陈洁</div>
<div class="a wm" style="left:630px;top:510px">陈洁</div>
<div class="a wm" style="left:841px;top:510px">陈洁</div>
<div class="a wm" style="left:1052px;top:510px">陈洁</div>
</body>
</html>
